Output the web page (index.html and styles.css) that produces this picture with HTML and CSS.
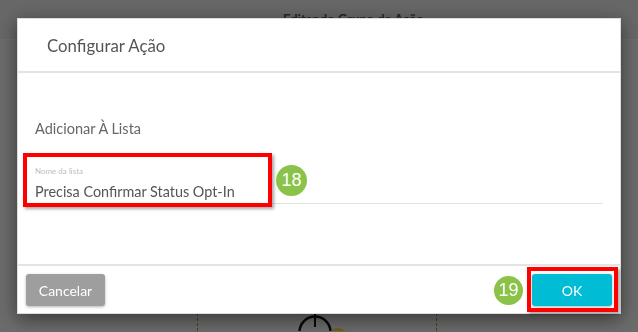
FILE: index.html
```html
<!DOCTYPE html>
<html lang="pt-BR">
<head>
  <meta charset="UTF-8">
  <title>Configurar Ação</title>
  <link rel="stylesheet" href="styles.css">
</head>
<body>

  <!-- página por trás do modal -->
  <div class="page">
    <header class="page-header">
      <span class="page-title">Editando Grupo de Ação</span>
    </header>
    <div class="canvas">
      <div class="step-box">
        <svg class="step-start" width="36" height="36" viewBox="0 0 36 36">
          <circle cx="18" cy="19" r="15.5" fill="none" stroke="#111" stroke-width="2.5"/>
          <line x1="18" y1="0" x2="18" y2="14" stroke="#111" stroke-width="2"/>
        </svg>
        <span class="step-dot"></span>
      </div>
    </div>
  </div>

  <!-- modal -->
  <div class="overlay">
    <div class="modal">
      <div class="modal-header">
        <h3>Configurar Ação</h3>
      </div>

      <div class="modal-body">
        <div class="action-name">Adicionar À Lista</div>
        <div class="field">
          <label class="field-label">Nome da lista</label>
          <div class="field-value">Precisa Confirmar Status Opt-In</div>
          <span class="mark mark-field"></span>
          <span class="badge badge-field">18</span>
        </div>
      </div>

      <div class="modal-footer">
        <button class="btn btn-cancel">Cancelar</button>
        <div class="footer-right">
          <span class="badge">19</span>
          <span class="ok-wrap">
            <button class="btn btn-ok">OK</button>
            <span class="mark mark-ok"></span>
          </span>
        </div>
      </div>
    </div>
  </div>

</body>
</html>
```

FILE: styles.css
```css
/* reset */
*, *::before, *::after {
  box-sizing: border-box;
}
html, body {
  margin: 0;
  padding: 0;
  width: 638px;
  height: 332px;
  overflow: hidden;
  background-color: #eeeeee;
  font-family: Lato, "Open Sans", Arial, sans-serif;
}

/* página de fundo */
.page-header {
  height: 40px;
  padding: 8px 0 0 283px;
  background-color: #e4e4e4;
  border-bottom: 1px solid #f4f4f4;
}
.page-title {
  font-size: 13px;
  font-weight: bold;
  color: #555;
}
.canvas {
  padding-top: 218px;
}
.step-box {
  display: flex;
  align-items: flex-start;
  width: 240px;
  height: 73px;
  margin-left: 197px;
  overflow: hidden;
  border-left: 1px dashed #7da545;
  border-right: 1px dashed #7da545;
}
.step-start {
  flex-shrink: 0;
  margin: 55px 0 0 99px;
}
.step-dot {
  flex-shrink: 0;
  width: 22px;
  height: 22px;
  margin: 70px 0 0 -6px;
  border-radius: 50%;
  background-color: #f2cf36;
}

/* camada escura + modal */
.overlay {
  position: fixed;
  top: 0;
  left: 0;
  right: 0;
  bottom: 0;
  display: flex;
  justify-content: center;
  align-items: flex-start;
  padding-top: 18px;
  background-color: rgba(0, 0, 0, 0.55);
}
.modal {
  width: 604px;
  background-color: #fff;
  border: 1px solid #dcdcdc;
  box-shadow: 0 5px 18px rgba(0, 0, 0, 0.5);
}

.modal-header {
  display: flex;
  align-items: center;
  height: 54px;
  padding-left: 29px;
  border-bottom: 2px solid #e4e4e4;
}
.modal-header h3 {
  margin: 0;
  font-size: 16.8px;
  font-weight: normal;
  color: #555;
}

.modal-body {
  height: 191px;
  padding: 47px 17px 0;
}
.action-name {
  font-size: 14.5px;
  line-height: 17px;
  color: #666;
}
.field {
  position: relative;
  margin-top: 29px;
}
.field-label {
  display: block;
  font-size: 8px;
  line-height: 10px;
  color: #bbb;
}
.field-value {
  margin-top: 7px;
  padding-bottom: 3px;
  font-size: 14.4px;
  line-height: 17px;
  color: #555;
  border-bottom: 1px solid #e2e2e2;
}

.modal-footer {
  display: flex;
  justify-content: space-between;
  align-items: center;
  padding: 8px 8px 7px;
  border-top: 2px solid #e4e4e4;
}
.footer-right {
  display: flex;
  align-items: center;
}

/* botões */
.btn {
  height: 32px;
  border: none;
  border-radius: 3px;
  font-family: Lato, Arial, sans-serif;
  font-size: 14px;
  color: #fff;
  box-shadow: 0 1px 3px rgba(0, 0, 0, 0.3);
  cursor: pointer;
}
.btn-cancel {
  width: 79px;
  background-color: #9e9e9e;
}
.btn-ok {
  display: block;
  width: 80px;
  background-color: #00bcd4;
}
.ok-wrap {
  position: relative;
  display: block;
}

/* marcações do tutorial */
.mark {
  position: absolute;
  border: 4px solid #f00;
  box-shadow: 2px 2px 3px rgba(0, 0, 0, 0.35);
}
.mark-field {
  left: -12px;
  top: -13px;
  width: 249px;
  height: 54px;
}
.mark-ok {
  top: -7px;
  left: -5px;
  right: -6px;
  bottom: -6px;
}
.badge {
  display: flex;
  align-items: center;
  justify-content: center;
  width: 29px;
  height: 29px;
  margin-right: 9px;
  border-radius: 50%;
  background-color: #8bc34a;
  color: #fff;
  font-family: "Liberation Sans", Arial, sans-serif;
  font-size: 18px;
}
.badge-field {
  position: absolute;
  left: 241px;
  top: -1px;
  width: 31px;
  height: 31px;
  margin: 0;
}
```
